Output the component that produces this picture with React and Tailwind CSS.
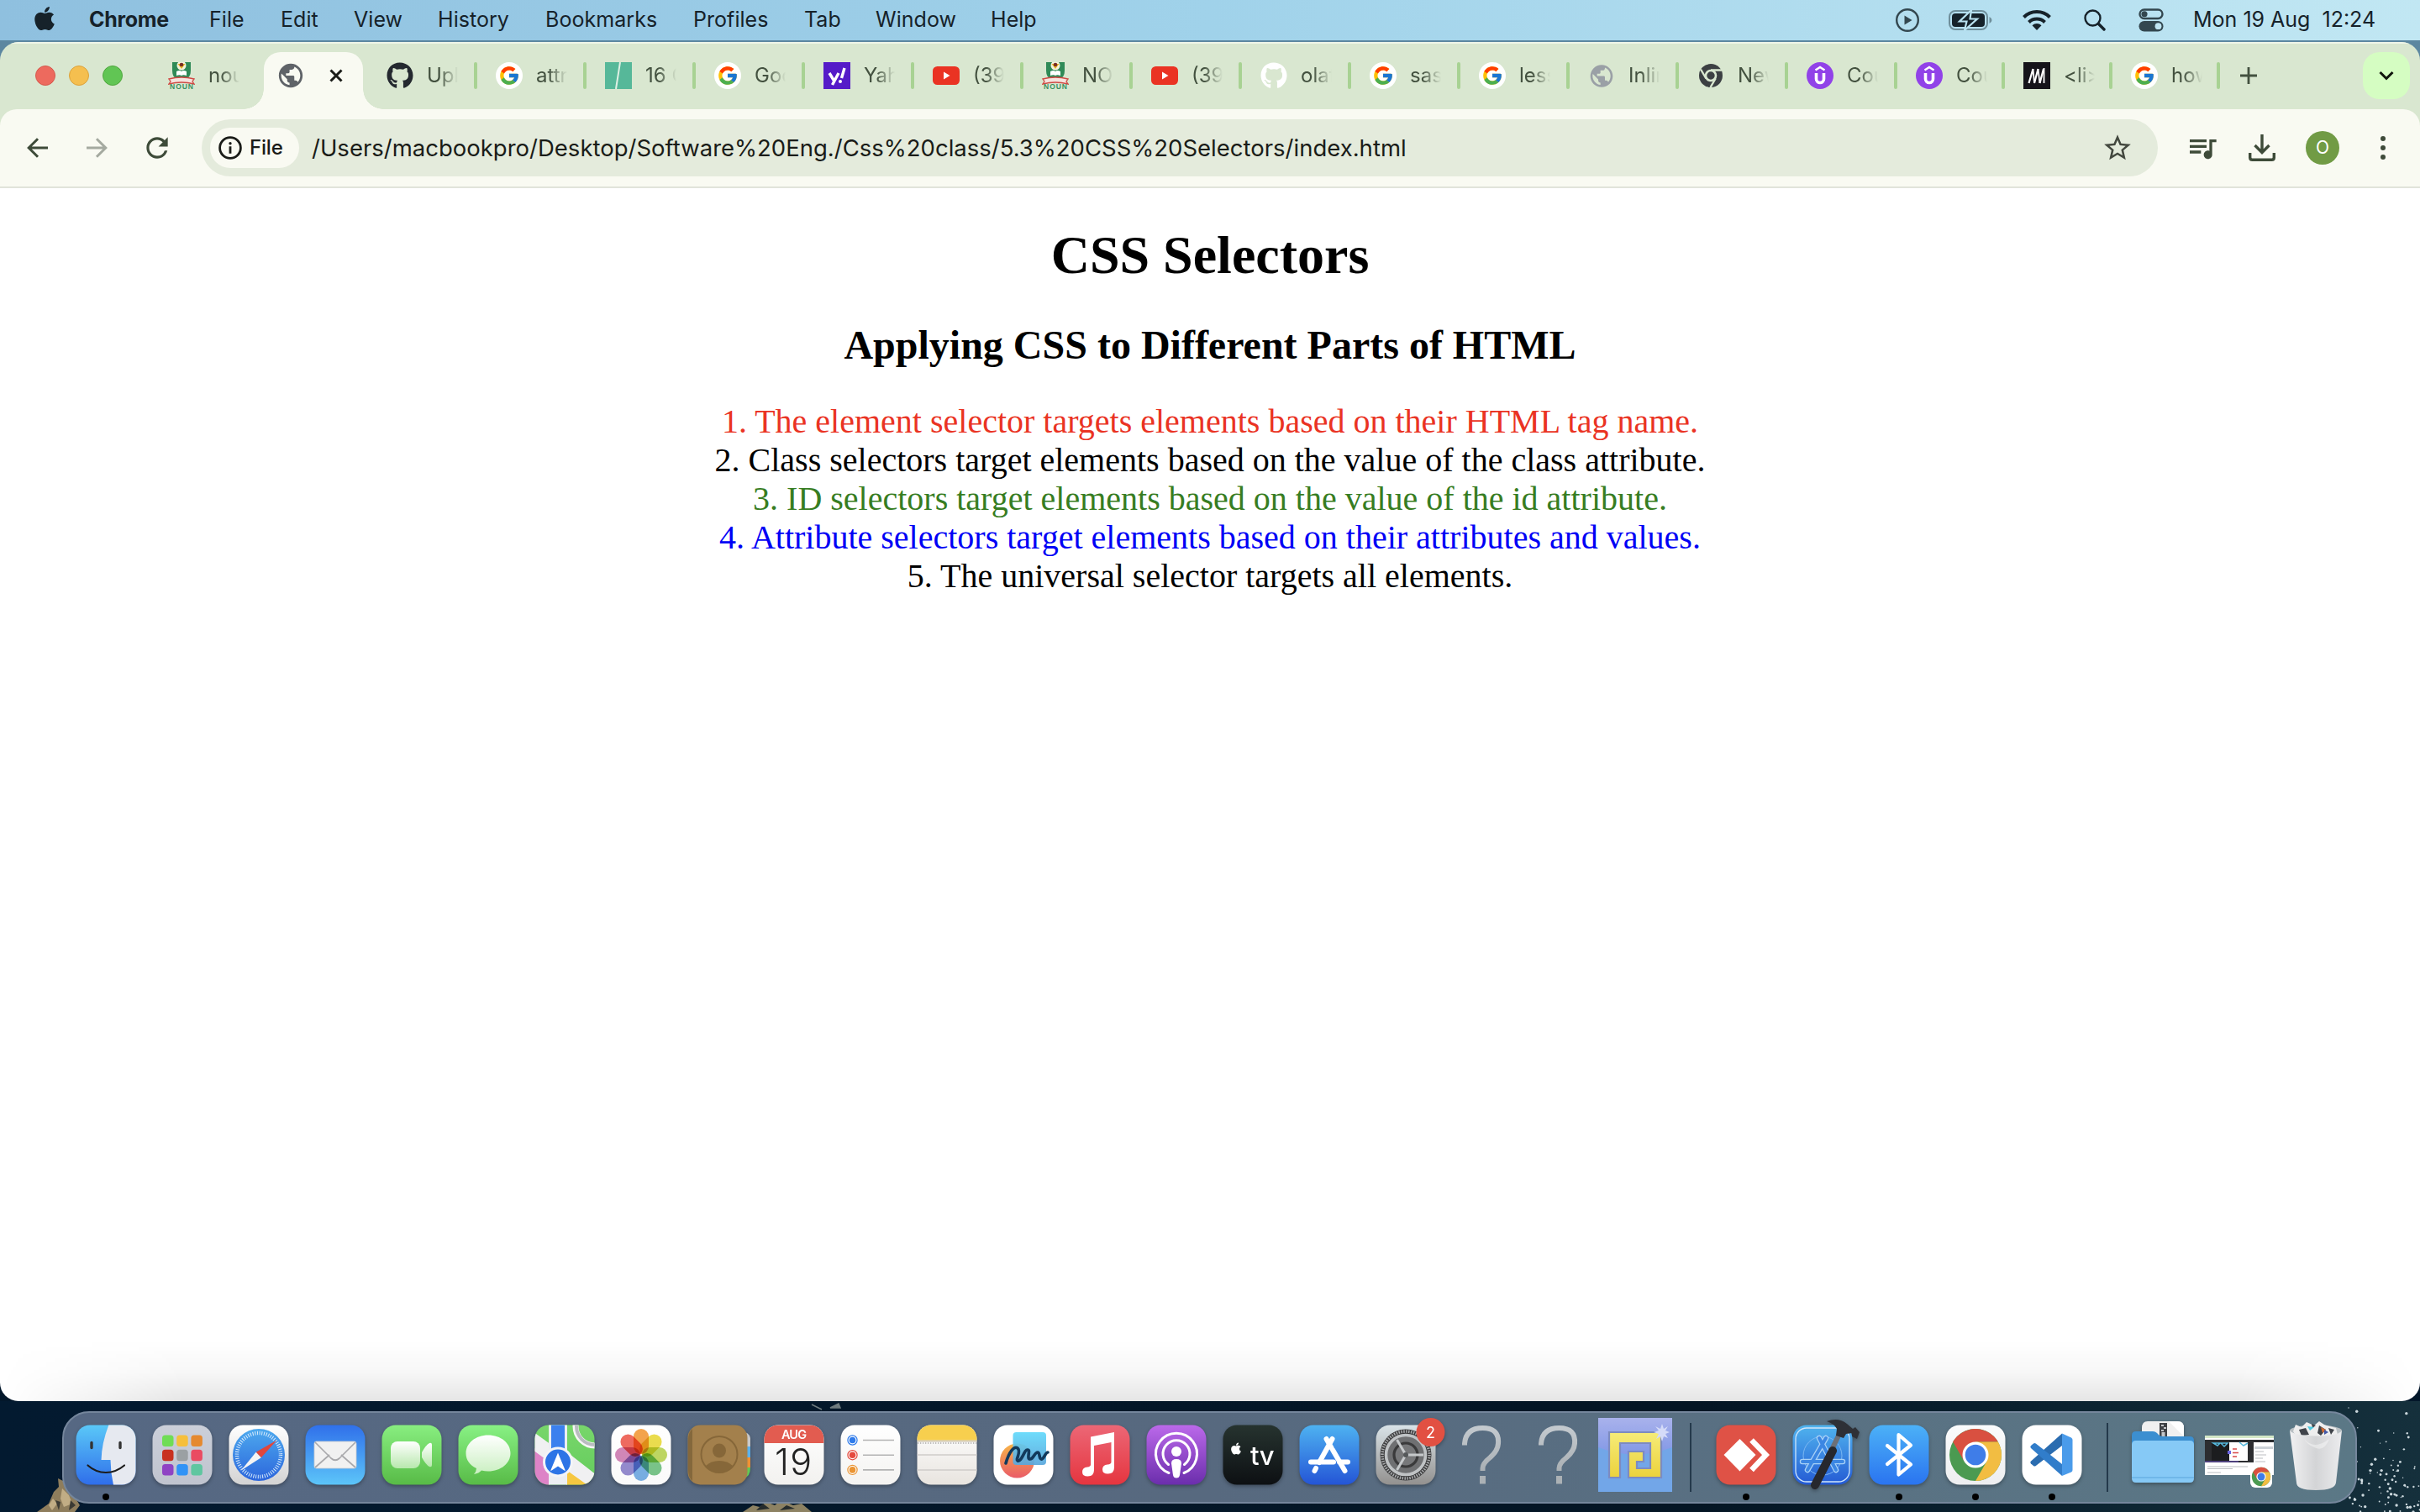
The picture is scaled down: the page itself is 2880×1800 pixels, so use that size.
import React from "react";
import { FaApple, FaGithub } from "react-icons/fa";
import { FcGoogle } from "react-icons/fc";
import { MdPublic, MdQueueMusic, MdStarBorder, MdRefresh } from "react-icons/md";

/* ---------- menu bar ---------- */

const menus = [
  ["File", "w-[85px]"],
  ["Edit", "w-[87px]"],
  ["View", "w-[100px]"],
  ["History", "w-[128px]"],
  ["Bookmarks", "w-[176px]"],
  ["Profiles", "w-[132px]"],
  ["Tab", "w-[85px]"],
  ["Window", "w-[137px]"],
  ["Help", "w-[80px]"],
];

function MenuBar() {
  return (
    <div className="flex h-12 items-center bg-linear-to-r from-[#8fc0df] via-[#a0d2ea] to-[#c1e7f3] text-[25px] leading-[46px] text-[#16222a]">
      <FaApple className="ml-[38px] h-[32px] w-[30px] -translate-y-[2px]" />
      <span className="ml-[38px] w-[143px] -translate-y-px font-bold tracking-[-0.3px]">Chrome</span>
      {menus.map(([label, w]) => (
        <span key={label} className={`${w} -translate-y-px tracking-[0.05px] whitespace-nowrap`}>{label}</span>
      ))}
      <div className="ml-auto flex items-center pr-[36px]">
        <svg className="h-7 w-7" viewBox="0 0 28 28">
          <circle cx="14" cy="14" r="12.8" fill="none" stroke="#33474f" strokeWidth="2.4" />
          <path d="M10.5 8.5v11l9-5.5z" fill="#33474f" />
        </svg>
        <svg className="ml-[35px] h-6 w-[52px]" viewBox="0 0 52 24">
          <rect x="1" y="1" width="45" height="22" rx="7" fill="none" stroke="#6f8f9b" strokeWidth="2" />
          <path d="M48.500 8v8q3-1.500 3-4t-3-4z" fill="#6f8f9b" />
          <rect x="4" y="4" width="39" height="16" rx="4" fill="#16222a" />
          <path d="M27 0 13 13.500h8.500L19 24 34 10.500h-8.500z" fill="#16222a" stroke="#b9e2f0" strokeWidth="2.200" />
        </svg>
        <svg className="ml-[36px] h-6 w-[34px]" viewBox="0 0 34 24">
          <g fill="none" stroke="#16222a" strokeWidth="4">
            <path d="M1.500 8.500a22 22 0 0 1 31 0" />
            <path d="M7.500 14.500a13.500 13.500 0 0 1 19 0" />
          </g>
          <path d="M17 24l-5.500-5.800a8 8 0 0 1 11 0z" fill="#16222a" />
        </svg>
        <svg className="ml-[39px] h-[26px] w-[26px]" viewBox="0 0 26 26" fill="none" stroke="#16222a" strokeLinecap="round">
          <circle cx="10.500" cy="10.500" r="9" strokeWidth="2.400" />
          <path d="M17.500 17.500 24 24" strokeWidth="3.400" />
        </svg>
        <svg className="ml-[39px] h-7 w-[30px]" viewBox="0 0 30 28">
          <rect x="1.500" y="1.500" width="27" height="10.500" rx="5.250" fill="none" stroke="#33474f" strokeWidth="2.400" />
          <circle cx="7" cy="6.750" r="3.600" fill="#33474f" />
          <rect x="0.500" y="15" width="29" height="12.500" rx="6.250" fill="#33474f" />
          <circle cx="23.500" cy="21.200" r="3.900" fill="#bfe5f2" />
        </svg>
        <span className="ml-[35px] w-[234px] -translate-y-px whitespace-pre text-[25px]">Mon 19 Aug  12:24</span>
      </div>
    </div>
  );
}

/* ---------- tab icons ---------- */

function Noun() {
  return (
    <svg className="h-8 w-8" viewBox="0 0 32 32">
      <path d="M5 0h22v10q0 8-6 10H11q-6-2-6-10z" fill="#2f8a57" />
      <circle cx="16" cy="4" r="5.500" fill="#f5f2dc" />
      <path d="M11.500 2h9L16 8z" fill="#e8b424" />
      <circle cx="16" cy="3" r="2.300" fill="#7a2f24" />
      <path d="M10 11q4-2 6 0 2-2 6 0v5q-4-1.500-6 0-2-1.500-6 0z" fill="#fff" />
      <path d="M1 20q15-4 30 0l-2 3 2 3q-15-4-30 0l2-3z" fill="#f6e3de" stroke="#cf4a45" strokeWidth="1.300" />
      <text x="2" y="32" fontFamily="Liberation Sans" fontWeight="700" fontSize="8.500" textLength="28" fill="#3b9060">NOUN</text>
    </svg>
  );
}

function Google() {
  return (
    <span className="flex h-8 w-8 items-center justify-center rounded-full bg-white">
      <FcGoogle className="h-[26px] w-[26px]" />
    </span>
  );
}

function Youtube() {
  return (
    <svg className="h-8 w-8" viewBox="0 0 32 32">
      <rect y="5" width="32" height="22" rx="5.500" fill="#ea3323" />
      <path d="M13 11.500v9l7.500-4.500z" fill="#fff" />
    </svg>
  );
}

function GreenSlash() {
  return (
    <svg className="h-8 w-8" viewBox="0 0 32 32">
      <path d="M0 0h32v32H0z" fill="#56b899" />
      <path d="M18 0 13 32" stroke="#dff0e4" strokeWidth="2" />
    </svg>
  );
}

function Yahoo() {
  return (
    <svg className="h-8 w-8" viewBox="0 0 32 32">
      <path d="M0 0h32v32H0z" fill="#551bc8" />
      <path d="M7 13l5.500 9M18 13l-7.500 14M21.500 19 25 7" stroke="#fff" strokeWidth="3.400" fill="none" />
      <circle cx="20" cy="23" r="2" fill="#fff" />
    </svg>
  );
}

function Udemy() {
  return (
    <svg className="h-8 w-8" viewBox="0 0 32 32">
      <circle cx="16" cy="16" r="16" fill="#9142e8" />
      <path d="M10.500 9.500 16 6l5.500 3.500" fill="none" stroke="#fff" strokeWidth="2.500" />
      <path d="M11.500 13v7a4.500 4.500 0 0 0 9 0v-7" fill="none" stroke="#fff" strokeWidth="3.600" />
    </svg>
  );
}

function Mdn() {
  return (
    <svg className="h-8 w-8" viewBox="0 0 32 32">
      <path d="M0 0h32v32H0z" fill="#15141a" />
      <path d="M6.500 25 11.500 8M13 25 17.500 8M19.500 25 24 8" stroke="#fff" strokeWidth="2.200" />
      <path d="M11.500 8 13 25M17.500 8l2 17M24.500 7v18" stroke="#fff" strokeWidth="1.800" />
    </svg>
  );
}

function ChromeGray() {
  return (
    <svg className="h-7 w-7" viewBox="0 0 28 28">
      <circle cx="14" cy="14" r="14" fill="#3c4043" />
      <circle cx="14" cy="14" r="6" fill="#3c4043" stroke="#d9e7d0" strokeWidth="2.600" />
      <path d="M14 7.500h13M8.400 17.500 2 6.500M19.600 17.500 13.500 28" stroke="#d9e7d0" strokeWidth="2.400" />
    </svg>
  );
}

const tabs = [
  ["Uploa", "github"],
  ["attrib", "google"],
  ["16 C", "slash"],
  ["Googl", "google"],
  ["Yahoo", "yahoo"],
  ["(39)", "youtube"],
  ["NOU", "noun"],
  ["(39)", "youtube"],
  ["olaf", "githubWhite"],
  ["sass", "google"],
  ["less", "google"],
  ["Inline", "globe"],
  ["New", "chrome"],
  ["Cour", "udemy"],
  ["Cour", "udemy"],
  ["<li>:", "mdn"],
  ["how", "google"],
];

const tabIcons = {
  github: <FaGithub className="h-8 w-8 text-[#24292f]" />,
  githubWhite: <FaGithub className="h-8 w-8 text-white" />,
  google: <Google />,
  slash: <GreenSlash />,
  yahoo: <Yahoo />,
  youtube: <Youtube />,
  noun: <Noun />,
  globe: <MdPublic className="h-[33px] w-[33px] text-[#9aa0a6]" />,
  chrome: <ChromeGray />,
  udemy: <Udemy />,
  mdn: <Mdn />,
};

function TabTitle({ children }) {
  return (
    <span className="ml-4 w-[37px] overflow-hidden mask-r-from-40% mask-r-to-100% text-[24px] leading-8 whitespace-nowrap text-[#43513f]">
      {children}
    </span>
  );
}

function TabStrip() {
  return (
    <div className="flex h-20 items-center bg-[#d9e7d0] shadow-[inset_0_2px_0_#eef5e8]">
      <div className="flex gap-4 pl-[42px]">
        <span className="h-6 w-6 rounded-full border border-[#d55a4e] bg-[#ed6a5e]" />
        <span className="h-6 w-6 rounded-full border border-[#dba23c] bg-[#f5bf4f]" />
        <span className="h-6 w-6 rounded-full border border-[#51a73f] bg-[#61c554]" />
      </div>
      <div className="ml-[54px] flex items-center">
        <Noun />
        <TabTitle>noun</TabTitle>
      </div>
      <div className="relative ml-[29px] mt-3 flex h-[68px] w-[118px] items-center rounded-t-[20px] bg-[#f9faf2] pb-3">
        <span className="absolute bottom-0 -left-6 h-6 w-6 bg-radial-[at_0%_0%] from-[#d9e7d0] from-[23.5px] to-[#f9faf2] to-[24px]" />
        <span className="absolute -right-6 bottom-0 h-6 w-6 bg-radial-[at_100%_0%] from-[#d9e7d0] from-[23.5px] to-[#f9faf2] to-[24px]" />
        <MdPublic className="ml-[15px] h-[34px] w-[34px] text-[#5f6368]" />
        <svg className="ml-[29px] h-4 w-4" viewBox="0 0 16 16">
          <path d="M1.500 1.500l13 13M14.500 1.500l-13 13" stroke="#1a1c18" strokeWidth="3" />
        </svg>
      </div>
      <div className="ml-[6px] flex">
        {tabs.map(([title, icon], i) => (
          <div key={i} className={`${i < 14 ? "w-[130px]" : "w-[128px]"} flex items-center pl-[22px]`}>
            <span className="flex h-8 w-8 shrink-0 items-center justify-center">{tabIcons[icon]}</span>
            <TabTitle>{title}</TabTitle>
            <span className="ml-auto h-8 w-[4px] rounded-full bg-[#a8d293]" />
          </div>
        ))}
      </div>
      <svg className="ml-[24px] h-5 w-5" viewBox="0 0 20 20">
        <path d="M10 0v20M0 10h20" stroke="#43513f" strokeWidth="2.800" />
      </svg>
      <div className="mr-3 ml-auto flex h-14 w-14 items-center justify-center rounded-[20px] bg-[#d5fdc2]">
        <svg className="h-3 w-[18px]" viewBox="0 0 18 12">
          <path d="M1.500 2 9 9.500 16.500 2" fill="none" stroke="#10150c" strokeWidth="3" />
        </svg>
      </div>
    </div>
  );
}

/* ---------- toolbar ---------- */

function Toolbar() {
  return (
    <div className="bg-[#d9e7d0]">
      <div className="flex h-[94px] items-center rounded-t-[20px] border-b-2 border-[#e1e4da] bg-[#f9faf2]">
        <svg className="ml-8 h-6 w-[25px]" viewBox="0 0 25 24" fill="none" stroke="#3e4b39" strokeWidth="3">
          <path d="M25 12H3M13 1.200 2.200 12 13 22.800" />
        </svg>
        <svg className="ml-[46px] h-6 w-[25px]" viewBox="0 0 25 24" fill="none" stroke="#a5aaa0" strokeWidth="3">
          <path d="M0 12h22M12 1.200 22.800 12 12 22.800" />
        </svg>
        <MdRefresh className="ml-[40px] h-[38px] w-[38px] text-[#3e4b39]" />
        <div className="ml-[34px] flex h-[68px] w-[2328px] items-center rounded-full bg-[#e4ebdc] pl-[10px]">
          <div className="flex h-12 w-[106px] items-center rounded-full bg-[#f9faf2] pl-[10px]">
            <svg className="h-7 w-7" viewBox="0 0 28 28">
              <circle cx="14" cy="14" r="12.400" fill="none" stroke="#1a1c18" strokeWidth="2.800" />
              <path d="M14 12.300v8.400" stroke="#1a1c18" strokeWidth="2.800" />
              <circle cx="14" cy="8.800" r="1.700" fill="#1a1c18" />
            </svg>
            <span className="ml-[9px] text-[24px] leading-8 font-medium tracking-[-0.2px] text-[#1a1c18]">File</span>
          </div>
          <span className="ml-[15px] text-[27.500px] leading-9 tracking-[0px] whitespace-nowrap text-[#1a1c18]">
            /Users/macbookpro/Desktop/Software%20Eng./Css%20class/5.3%20CSS%20Selectors/index.html
          </span>
          <MdStarBorder className="mr-[29px] ml-auto h-[38px] w-[38px] text-[#43483f]" />
        </div>
        <MdQueueMusic className="ml-[33px] h-10 w-10 text-[#3e4b39]" />
        <svg className="ml-[35px] h-8 w-8" viewBox="0 0 32 32" fill="none" stroke="#3e4b39" strokeWidth="3.400">
          <path d="M16 0v21M7.500 13 16 21.500l8.500-8.500M1.700 22v5.500q0 2.800 2.800 2.800h23q2.800 0 2.800-2.800V22" />
        </svg>
        <span className="ml-9 flex h-10 w-10 items-center justify-center rounded-full bg-[#719b45] text-[21px] text-white">O</span>
        <svg className="ml-[49px] h-7 w-[6px]" viewBox="0 0 6 28" fill="#3e4b39">
          <circle cx="3" cy="3" r="3" />
          <circle cx="3" cy="14" r="3" />
          <circle cx="3" cy="25" r="3" />
        </svg>
      </div>
    </div>
  );
}

/* ---------- page ---------- */

function Page() {
  return (
    <div className="relative grow bg-white pt-[43px] text-center font-['Liberation_Serif',serif] text-black">
      <h1 className="text-[64px] leading-[74px] font-bold">CSS Selectors</h1>
      <h2 className="mt-[42px] text-[48px] leading-[56px] font-bold">Applying CSS to Different Parts of HTML</h2>
      <div className="mt-10 text-[40px] leading-[46px]">
        <p className="text-[#ea3323]">1. The element selector targets elements based on their HTML tag name.</p>
        <p>2. Class selectors target elements based on the value of the class attribute.</p>
        <p className="text-[#377d22]">3. ID selectors target elements based on the value of the id attribute.</p>
        <p className="text-[#0000f5]">4. Attribute selectors target elements based on their attributes and values.</p>
        <p>5. The universal selector targets all elements.</p>
      </div>
      <div className="absolute inset-x-0 bottom-0 h-[72px] bg-linear-to-b from-transparent via-black/3 to-black/10 mask-x-from-[calc(100%-220px)] mask-x-to-100%" />
    </div>
  );
}

/* ---------- dock icons ---------- */

function Grad({ id, a, b }) {
  return (
    <linearGradient id={id} x1="0" y1="0" x2="0" y2="1">
      <stop offset="0" stopColor={a} />
      <stop offset="1" stopColor={b} />
    </linearGradient>
  );
}

function Tile({ id, a, b, children }) {
  return (
    <svg className="h-[72px] w-[72px] overflow-visible drop-shadow-[0_2px_2px_rgba(0,0,0,0.3)]" viewBox="0 0 72 72">
      <defs>
        <Grad id={id} a={a} b={b} />
        <clipPath id={`${id}-clip`}>
          <rect x="0.500" y="0.500" width="71" height="71" rx="16.500" />
        </clipPath>
      </defs>
      <rect x="0.500" y="0.500" width="71" height="71" rx="16.500" fill={`url(#${id})`} />
      {children}
    </svg>
  );
}

function Finder() {
  return (
    <Tile id="finder" a="#5ac8f8" b="#2f6eea">
      <g clipPath="url(#finder-clip)">
        <path d="M39.500 0Q31 22 30.500 42h11q0 15 3.500 30H72V0z" fill="#e6e9f0" />
      </g>
      <path d="M19 21.500v6M53 21.500v6" stroke="#333" strokeWidth="3.400" strokeLinecap="round" />
      <path d="M14.500 48.500Q24 57 36 57t22-8.500" fill="none" stroke="#1c1c1c" strokeWidth="2.200" strokeLinecap="round" />
    </Tile>
  );
}

const padColors = ["#6fdd55", "#f6bf3c", "#e5892f", "#c8301f", "#9ba0a3", "#ea4b62", "#8f43c4", "#3193f6", "#5fc6a0"];

function Launchpad() {
  return (
    <Tile id="pad" a="#cbcfd9" b="#c0c4cf">
      {padColors.map((c, i) => (
        <rect key={c} x={12 + (i % 3) * 17.2} y={12.500 + Math.floor(i / 3) * 17.3} width="13.500" height="13.500" rx="3.500" fill={c} />
      ))}
    </Tile>
  );
}

function Safari() {
  return (
    <Tile id="safari" a="#ffffff" b="#d3d3d3">
      <defs><Grad id="safari-in" a="#4da9ee" b="#2c66dc" /></defs>
      <circle cx="36" cy="36" r="31" fill="url(#safari-in)" />
      <circle cx="36" cy="36" r="26" fill="none" stroke="#d8ebfb" strokeWidth="4.500" strokeDasharray="1 1.720" />
      <path d="M57.500 18.500 38.800 39.200 32.600 32.800z" fill="#e0463c" />
      <path d="M15 54.500 38.800 39.200 32.600 32.800z" fill="#f4f4f4" />
    </Tile>
  );
}

function Mail() {
  return (
    <Tile id="mail" a="#3070ea" b="#5cc5f9">
      <rect x="11" y="20" width="50" height="32" rx="2.500" fill="#f1f1f1" stroke="#c9cbd0" strokeWidth="0.800" />
      <path d="M12 51 29 36M60 51 43 36M12 21l19 19q5 4.500 10 0l19-19" fill="none" stroke="#a9a9ac" strokeWidth="1.700" />
    </Tile>
  );
}

function FaceTime() {
  return (
    <Tile id="ft" a="#88ee80" b="#58bb47">
      <defs><Grad id="ft-in" a="#ffffff" b="#b8e8ad" /></defs>
      <rect x="11" y="20" width="35" height="32" rx="8" fill="url(#ft-in)" />
      <path d="M48 33q5-9 9-11 3-1 3 2v24q0 3-3 2-4-2-9-11z" fill="url(#ft-in)" />
    </Tile>
  );
}

function Messages() {
  return (
    <Tile id="msg" a="#88f184" b="#58bb47">
      <defs><Grad id="msg-in" a="#ffffff" b="#c9efc0" /></defs>
      <path d="M36 12.500c15 0 26.500 9.500 26.500 21.500S51 55.500 36 55.500q-4 0-8-1-3 3.500-9 4.500 3-3.500 3-7C14 48 9.500 42 9.500 34 9.500 22 21 12.500 36 12.500z" fill="url(#msg-in)" />
    </Tile>
  );
}

function Maps() {
  return (
    <Tile id="maps" a="#78d66b" b="#64cc5c">
      <g clipPath="url(#maps-clip)">
        <path d="M0 28l18 10v34H0z" fill="#dd83c7" />
        <path d="M38 46l34 26H38z" fill="#f6c741" />
        <path d="M-2 8 20 24v22L-2 30zM38 32l36 28v14h-8L38 54z" fill="#f0f0f2" />
        <circle cx="72" cy="2" r="23" fill="none" stroke="#f6f6f6" strokeWidth="7" />
        <circle cx="72" cy="2" r="22" fill="none" stroke="#b9bcc0" strokeWidth="4" />
        <path d="M17 0h22v72H17z" fill="#eceef2" />
        <path d="M20 0h16v40H20z" fill="#3b80ee" />
      </g>
      <circle cx="28" cy="44.500" r="18" fill="#f3f4f7" />
      <circle cx="28" cy="44.500" r="15" fill="#2c74e6" />
      <path d="M28 33.500 36.500 54q.5 1.500-1 .6L28 49.500l-7.500 5.100q-1.500.9-1-.6z" fill="#fff" />
    </Tile>
  );
}

const petals = ["#f39a38", "#e9da3a", "#b8d452", "#6dc07e", "#6ba7e2", "#8a7fcb", "#cf7bb2", "#ee5b4e"];

function Photos() {
  return (
    <Tile id="photos" a="#ffffff" b="#fafafa">
      {petals.map((c, i) => (
        <rect key={c} x="27" y="5" width="18" height="30" rx="9" fill={c} className="mix-blend-multiply" opacity="0.9" transform={`rotate(${i * 45} 36 36)`} />
      ))}
    </Tile>
  );
}

function Contacts() {
  return (
    <svg className="h-[72px] w-[72px] overflow-visible drop-shadow-[0_2px_2px_rgba(0,0,0,0.3)]" viewBox="0 0 72 72">
      <path d="M64 8q10 1 11 8v10H64z" fill="#c9c9c9" />
      <path d="M64 26h11v13H64z" fill="#5bb2ee" />
      <path d="M64 39h11v12H64z" fill="#ef9134" />
      <path d="M64 51h11q0 12-9 13z" fill="#62cc53" />
      <rect y="0.500" x="0.500" width="71" height="71" rx="15" fill="#a3804c" />
      <path d="M6 5Q1 9 1 18v36q0 9 5 13z" fill="#84683c" />
      <circle cx="38" cy="35.500" r="21.500" fill="none" stroke="#866739" strokeWidth="2" />
      <ellipse cx="38" cy="31" rx="8" ry="8.500" fill="#866739" />
      <path d="M22 49q6-6 16-6t16 6q-6 8-16 8t-16-8z" fill="#866739" />
    </svg>
  );
}

function Calendar() {
  return (
    <Tile id="cal" a="#ffffff" b="#f2f1ef">
      <path d="M0 22V17Q0 .5 17 .5h38Q71.500.5 71.500 17v5z" fill="#e25c50" clipPath="url(#cal-clip)" />
      <text x="36" y="17" textAnchor="middle" fontFamily="Inter" fontWeight="600" fontSize="14.500" textLength="30" fill="#fff">AUG</text>
      <text x="35" y="60" textAnchor="middle" fontFamily="Inter" fontWeight="300" fontSize="43" textLength="44" fill="#222">19</text>
    </Tile>
  );
}

function Reminders() {
  return (
    <Tile id="rem" a="#ffffff" b="#f4f3f1">
      {["#2f7bea", "#e5493e", "#ea9433"].map((c, i) => (
        <g key={c}>
          <circle cx="14.500" cy={18.500 + i * 17.700} r="5.600" fill="#fff" stroke={c} strokeWidth="1.200" />
          <circle cx="14.500" cy={18.500 + i * 17.700} r="3.800" fill={c} />
          <path d={`M27 ${18.500 + i * 17.700}h37`} stroke="#b3b3b3" strokeWidth="1.600" />
        </g>
      ))}
    </Tile>
  );
}

function Notes() {
  return (
    <Tile id="notes" a="#ffffff" b="#e8e4df">
      <g clipPath="url(#notes-clip)">
        <path d="M0 0h72v18.500H0z" fill="#f7cf4e" />
        <path d="M0 19.500h72" stroke="#c9bda0" strokeWidth="1.500" />
        <path d="M1 22h72" stroke="#a9a9a9" strokeWidth="1.600" strokeDasharray="1.300 1.700" />
        <path d="M0 36h72M0 54h72" stroke="#cfcdca" strokeWidth="1.300" />
      </g>
    </Tile>
  );
}

function Freeform() {
  return (
    <Tile id="free" a="#ffffff" b="#ffffff">
      <defs><Grad id="free-o" a="#f7b548" b="#ea5c68" /><Grad id="free-b" a="#63d9fb" b="#5aa7dc" /></defs>
      <circle cx="28.500" cy="43" r="20.500" fill="url(#free-o)" />
      <rect x="23.500" y="9" width="39.500" height="39" rx="4" fill="url(#free-b)" opacity="0.930" />
      <path d="M15 46C19 32 25 25 29 28c5 4-3 14 0 15 5 2 8-14 12-13 4 0-2 11 3 11 4 0 5-8 9-8 3 0 1 9 5 8 3-1 4-8 7-8" fill="none" stroke="#123a5c" strokeWidth="3.600" strokeLinecap="round" />
    </Tile>
  );
}

function Music() {
  return (
    <Tile id="music" a="#ec6776" b="#e5353f">
      <path d="M25 16.500 53 11v42q0 7.500-7.500 7.500-6.500 0-6.500-5.200 0-5.300 6-5.800 4.500-.3 4.500-3V23L29 27v29q0 7.500-7.500 7.500-6.500 0-6.500-5.200 0-5.300 6-5.800 4-.3 4-3z" transform="translate(0 -2)" fill="#fff" />
    </Tile>
  );
}

function Podcasts() {
  return (
    <Tile id="pod" a="#bb69ea" b="#6b2eac">
      <g fill="none" stroke="#fff" strokeWidth="3" strokeLinecap="round">
        <path d="M27 57.500a24.500 24.500 0 1 1 18 0" />
        <path d="M26.500 47.500a16 16 0 1 1 19 0" />
      </g>
      <circle cx="36" cy="32" r="6" fill="#fff" />
      <path d="M36 41q6 0 6 5l-2 14q-.6 3.500-4 3.500T32 60l-2-14q0-5 6-5z" fill="#fff" />
    </Tile>
  );
}

function AppleTv() {
  return (
    <Tile id="tv" a="#26332f" b="#0d1013">
      <FaApple x="8" y="20.500" width="25" height="28" color="#fff" />
      <text x="33" y="47.500" fontFamily="Inter" fontWeight="500" fontSize="31" textLength="28.500" fill="#fff">tv</text>
    </Tile>
  );
}

function AppStore() {
  return (
    <Tile id="store" a="#4eb2f1" b="#2455d6">
      <g stroke="#fff" strokeWidth="6" strokeLinecap="round">
        <path d="M39.500 17 24 45M20 52l-1.500 3M32.500 17l6 10.500M40 30l14.500 25" />
        <path d="M14 44.500h27M48 44.500h10" />
      </g>
    </Tile>
  );
}

function Settings() {
  return (
    <Tile id="set" a="#d9e3e8" b="#93918f">
      <circle cx="36" cy="36" r="30.500" fill="#3a3a3b" />
      <circle cx="36" cy="36" r="28" fill="none" stroke="#a9abad" strokeWidth="3.500" strokeDasharray="1.500 1.430" />
      <circle cx="36" cy="36" r="23.500" fill="#6f7072" stroke="#c0c3c5" strokeWidth="3.600" />
      <circle cx="36" cy="36" r="14" fill="#77787a" stroke="#3a3a3b" strokeWidth="3.200" />
      <path d="M36 36h21M36 36 25.500 18M36 36 25.500 54" stroke="#c6c9cb" strokeWidth="3" />
      <circle cx="36" cy="36" r="3" fill="#55585a" />
      <circle cx="65.500" cy="9" r="17" fill="#e25042" />
      <text x="65.500" y="15.500" textAnchor="middle" fontFamily="Inter" fontSize="18" fill="#fff">2</text>
    </Tile>
  );
}

function Question() {
  return (
    <svg className="h-[72px] w-[72px] overflow-visible" viewBox="0 0 72 72">
      <defs><Grad id="question" a="#c3c9ce" b="#aab0b4" /></defs>
      <path d="M14.500 24.500v-2Q16 4 36 4t18.500 18.500Q54 31 45 39q-9 7-9 13v3" transform="translate(.5 0)" fill="none" stroke="url(#question)" strokeWidth="6" />
      <path d="M33 61h7v9.500h-7z" fill="#abb1b5" />
    </svg>
  );
}

function PictureApp() {
  return (
    <svg className="h-[88px] w-[88px] shrink-0" viewBox="0 0 88 88">
      <defs><Grad id="pic" a="#a9b2ec" b="#8298e6" /><Grad id="pic-y" a="#f6ec78" b="#ecd23c" /></defs>
      <path d="M0 0h88v88H0z" fill="#72a6e8" />
      <path d="M0 0h88v35Q44 52 0 35z" fill="url(#pic)" />
      <path d="M13 17h62v54H36V40h18v12h-8v8h16V30H26v41H13z" fill="url(#pic-y)" stroke="#7d8bc0" strokeWidth="2.200" />
      <path d="M76 7l2 6 5-3-3 5 5 2-5 2 3 5-5-2-2 6-2-6-5 3 3-6-6-2 6-2-4-5 6 3z" fill="#d5dbf8" />
    </svg>
  );
}

function AnyDesk() {
  return (
    <Tile id="any" a="#df5246" b="#df5246">
      <path d="M28.500 17 47.500 36 28.500 55.500 9.500 36z" fill="#fff" />
      <path d="M42.500 18.500 59.500 36 42.500 54" fill="none" stroke="#fff" strokeWidth="6.500" />
    </Tile>
  );
}

function Xcode() {
  return (
    <Tile id="xcode" a="#50b4ee" b="#245ad4">
      <rect x="4" y="4" width="64" height="64" rx="13" fill="none" stroke="#cfe6fb" strokeWidth="1.300" />
      <circle cx="36" cy="37" r="23" fill="none" stroke="#7db8f2" strokeWidth="1" />
      <path d="M32 16l20 38M40 16 18 54M12 44h48" stroke="#a9d2f7" strokeWidth="6.500" strokeLinecap="round" />
      <path d="M32 16l20 38M40 16 18 54M12 44h48" stroke="#3c87e3" strokeWidth="4" strokeLinecap="round" />
      <path d="M57 9 27 71" stroke="#6c7078" strokeWidth="6" />
      <path d="M48 31 27 72" stroke="#26282e" strokeWidth="10" strokeLinecap="round" />
      <path d="M41-4q14-5 24 3l7 6 3-2 5 6-3 8-6-3v-4l-7 1-3 5-9-3 1-8q-3-6-12-9z" fill="#2e3036" />
    </Tile>
  );
}

function Bluetooth() {
  return (
    <Tile id="bt" a="#4cb1f7" b="#2a74f0">
      <path d="M22 25 50 47.500 35.500 59.500V12L50 24.500 22 47" fill="none" stroke="#fff" strokeWidth="4.200" strokeLinejoin="round" strokeLinecap="round" />
    </Tile>
  );
}

function ChromeMark() {
  return (
    <g>
      <circle cx="36" cy="36" r="31" fill="#4b9a51" />
      <path d="M9.200 20.500A31 31 0 0 1 62.800 20.500H36L22.600 43.700z" fill="#d95040" />
      <path d="M62.800 20.500A31 31 0 0 1 36 67L49.400 43.700 36 20.500z" fill="#f2bd42" />
      <circle cx="36" cy="36" r="15.500" fill="#fff" />
      <circle cx="36" cy="36" r="12.300" fill="#3f7de8" />
    </g>
  );
}

function ChromeApp() {
  return (
    <Tile id="chrome" a="#fafbfc" b="#edeef0">
      <ChromeMark />
    </Tile>
  );
}

function VsCode() {
  return (
    <Tile id="vs" a="#ffffff" b="#ffffff">
      <path d="M48 10.500 11 43.500q-1.500 1.500 0 3l3 2.600q1.300 1 2.800 0L48 25z" fill="#2a6cb0" />
      <path d="M48 61 11 28q-1.500-1.500 0-3l3-2.600q1.300-1 2.800 0L48 47z" fill="#317dca" />
      <path d="M48 10.500l11 5q1.500 1 1.500 2.500v36q0 1.500-1.500 2.500L48 61z" fill="#4a9bea" />
    </Tile>
  );
}

function Folder() {
  return (
    <svg className="h-[76px] w-[76px] -translate-y-[2px] overflow-visible drop-shadow-[0_2px_2px_rgba(0,0,0,0.3)]" viewBox="0 0 76 76">
      <path d="M13 24V8q0-8 7-8h36q7 0 7 8v18z" fill="#f0f0f0" />
      <path d="M45 0l18 18V8q0-8-8-8z" fill="#fff" />
      <path d="M34 2h9v20h-9z" fill="#3f4145" />
      <path d="M36 4h3v2h-3zM39 7h3v2h-3zM36 10h3v2h-3zM36.500 13h4v8h-4z" fill="#c5c7ca" />
      <path d="M1 17q0-5 5-5h20q3 0 5 2l3 3q1.500 1 4 1h32q5 0 5 5v12H1z" fill="#3c8fd0" />
      <path d="M1 28q0-5 5-5h64q5 0 5 5v40q0 5-5 5H6q-5 0-5-5z" fill="#86c9f6" />
      <path d="M1 67h74" stroke="#68b1e4" strokeWidth="1.300" />
    </svg>
  );
}

function Thumbnail() {
  return (
    <svg className="h-[72px] w-[82px] shrink-0 overflow-visible" viewBox="0 0 82 72">
      <path d="M0 13h82v47H0z" fill="#fff" />
      <path d="M0 13h82v3H0z" fill="#d4e8c7" />
      <path d="M0 18h82v3H0z" fill="#2b2d30" />
      <path d="M0 21h58v24H0z" fill="#2c2d30" />
      <path d="M8 21h21v22H8z" fill="#1c1d1f" />
      <path d="M29 21h22v22H29z" fill="#fff" />
      <path d="M10 22h8l-3 3zM19 22h8l-4 4zM41 21l5 4 5-3" fill="none" stroke="#57b9dd" strokeWidth="1.500" />
      <path d="M33 29h5M33 33.500h7M33 38h5" stroke="#d94848" strokeWidth="1.600" />
      <rect x="27" y="31" width="4" height="4" fill="#6a63e0" />
      <path d="M59 26h22v3H59z" fill="#ccd2d8" />
      <path d="M60 32h10M60 36h13M60 40h9M60 44h12M3 50h48M3 52.500h30M3 57h16" stroke="#b2b5b9" strokeWidth="0.900" />
      <path d="M0 44h40" stroke="#6f54c8" strokeWidth="1" />
      <rect x="54" y="49" width="26" height="26" rx="6" fill="#fff" />
      <g transform="translate(54 49) scale(.361)">
        <ChromeMark />
      </g>
    </svg>
  );
}

function Trash() {
  return (
    <svg className="h-[84px] w-[64px] overflow-visible" viewBox="0 0 64 84">
      <defs>
        <linearGradient id="trash" x1="0" y1="0" x2="1" y2="0">
          <stop offset="0" stopColor="#f1f1f2" />
          <stop offset=".5" stopColor="#d3d4d6" />
          <stop offset="1" stopColor="#ececee" />
        </linearGradient>
      </defs>
      <ellipse cx="32" cy="13" rx="31" ry="6.500" fill="#b9c0c4" />
      <path d="M5 14 8 6l7 3 6-6 9 4 6-5 6 4 6 2 8 2 2 8-10 4H10z" fill="#eeeeee" />
      <path d="M12 12l8-2 4 8-9 1zM36 7l8 5-6 7-4-3zM47 10l7 2-4 6zM27 5l5 2-4 3z" fill="#40444a" />
      <path d="M22 8l8 1-5 4z" fill="#4ecadf" />
      <path d="M38 9l6 3-4 4z" fill="#d16a33" />
      <path d="M42 12l5 3-5 3z" fill="#4259a8" />
      <path d="M1 13q5 6 31 6.500T63 13l-7 62q-1 9-24 9T9 75z" fill="url(#trash)" />
      <path d="M18 23q12 14 30 0-6 16-18 10-8-3-12-10z" fill="#fff" opacity=".4" />
    </svg>
  );
}

/* ---------- dock ---------- */

const mainApps = [
  [Finder, true], [Launchpad], [Safari], [Mail], [FaceTime], [Messages], [Maps], [Photos], [Contacts], [Calendar],
  [Reminders], [Notes], [Freeform], [Music], [Podcasts], [AppleTv], [AppStore], [Settings], [Question], [Question], [PictureApp],
];
const runningApps = [[AnyDesk, true], [Xcode], [Bluetooth, true], [ChromeApp, true], [VsCode, true]];
const rightItems = [[Folder], [Thumbnail], [Trash]];

function Group({ items }) {
  return items.map(([Icon, running], i) => (
    <div key={i} className="flex h-[106px] w-[91px] shrink-0 flex-col items-center">
      <div className="flex h-[100px] w-full shrink-0 items-center justify-center">
        <Icon />
      </div>
      {running && <span className="-mt-[4px] h-2 w-2 rounded-full bg-black" />}
    </div>
  ));
}

function Divider() {
  return (
    <div className="flex w-[41px] shrink-0 justify-center pt-3">
      <span className="h-[82px] w-[2px] bg-[#24394b]" />
    </div>
  );
}

function Rocks() {
  const foam = [];
  for (let i = 0; i < 90; i++) {
    const a = Math.abs(Math.sin(i * 12.9898) * 43758.5453) % 1;
    const b = Math.abs(Math.sin(i * 78.233) * 12543.123) % 1;
    foam.push([2795 + a * 85, 8 + Math.sqrt(b) * 124, 0.7 + (i % 5) * 0.25]);
  }
  return (
    <svg className="absolute inset-0 h-[132px] w-[2880px]" viewBox="0 0 2880 132">
      <path d="M44 132l14-10 6-14 6-6-1-10 8 4 4 10 8 8 6 10-6 8z" fill="#8e7d5c" />
      <path d="M58 124l5-8 5 6-6 8zM74 104l8 8 4 10-10 4-4-10z" fill="#c1ad85" />
      <path d="M66 118l6 2-2 10zM84 118l6 6-8 6z" fill="#3b3a33" />
      <path d="M884 132l12-8 8 2 8-6 10 4 8-6 14 6 10-2 12 10z" fill="#8d8263" />
      <path d="M900 130l8-8 8 6zM928 130l8-6 10 4z" fill="#262c2c" />
      <path d="M966 4l12 6M988 8l10-5 2 5z" stroke="#6f7b7e" strokeWidth="1.500" fill="#6f7b7e" />
      {foam.map(([x, y, r], i) => (
        <circle key={i} cx={x} cy={y} r={r} fill="#dfeaee" opacity="0.9" />
      ))}
    </svg>
  );
}

function Dock() {
  return (
    <div className="relative h-[132px] pt-3">
      <Rocks />
      <div className="relative ml-[74px] flex h-[110px] w-[2731px] rounded-[32px] border-2 border-[#75869c] bg-linear-to-r from-[#566883] via-[#57697f] to-[#5b7886] pl-[4.500px]">
        <Group items={mainApps} />
        <Divider />
        <Group items={runningApps} />
        <Divider />
        <Group items={rightItems} />
      </div>
    </div>
  );
}

export default function App() {
  return (
    <div className="flex h-[1800px] w-[2880px] flex-col overflow-hidden bg-[#02121f] font-[Inter,sans-serif]">
      <MenuBar />
      <div className="flex h-[1620px] flex-col bg-linear-to-b from-[#5c87a0] from-10% to-[#03172a] to-30% pt-[2px]">
        <div className="flex grow flex-col overflow-hidden rounded-[22px]">
          <TabStrip />
          <Toolbar />
          <Page />
        </div>
      </div>
      <div className="bg-linear-to-r from-[#031a30] via-[#041524] via-70% to-[#15303c]">
        <Dock />
      </div>
    </div>
  );
}
